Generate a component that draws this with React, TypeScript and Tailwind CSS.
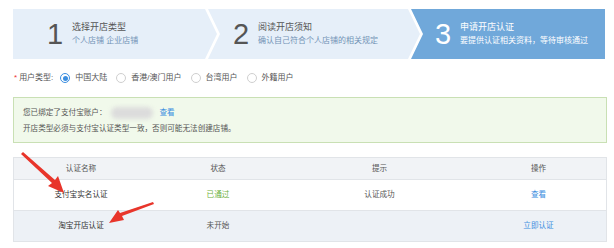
import { useState } from "react";

type Step = {
  num: string;
  title: string;
  desc: string;
  active?: boolean;
};

const steps: Step[] = [
  { num: "1", title: "选择开店类型", desc: "个人店铺  企业店铺" },
  { num: "2", title: "阅读开店须知", desc: "确认自己符合个人店铺的相关规定" },
  { num: "3", title: "申请开店认证", desc: "要提供认证相关资料，等待审核通过", active: true },
];

const userTypes = ["中国大陆", "香港/澳门用户", "台湾用户", "外籍用户"];

type CertRow = {
  name: string;
  status: string;
  statusColor: string;
  tip: string;
  action: string;
  striped?: boolean;
};

const rows: CertRow[] = [
  { name: "支付宝实名认证", status: "已通过", statusColor: "text-[#6cb13c]", tip: "认证成功", action: "查看" },
  { name: "淘宝开店认证", status: "未开始", statusColor: "text-[#555]", tip: "", action: "立即认证", striped: true },
];

export default function App() {
  const [userType, setUserType] = useState<string>("中国大陆");

  return (
    <div className="relative w-[614px] h-[248px] bg-white pt-[9px] px-[13px] font-['Liberation_Sans','Noto_Sans_CJK_SC',sans-serif] text-[#555] overflow-hidden">
      {/* Steps */}
      <div className="flex h-[50px] w-[592px]">
        {steps.map((step, i) => (
          <div
            key={step.num}
            className={
              i === 0
                ? "flex items-center h-full w-[204px] pl-[34px] bg-[#e6eff9] [clip-path:polygon(0_0,calc(100%-12px)_0,100%_50%,calc(100%-12px)_100%,0_100%)]"
                : i === 1
                ? "flex items-center h-full w-[212px] -ml-[9px] pl-[25px] bg-[#e6eff9] [clip-path:polygon(0_0,calc(100%-12px)_0,100%_50%,calc(100%-12px)_100%,0_100%,12px_50%)]"
                : "flex items-center h-full flex-1 -ml-[9px] pl-[24px] bg-[#70a8da] [clip-path:polygon(0_0,100%_0,100%_100%,0_100%,12px_50%)]"
            }
          >
            <span
              className={
                "text-[29px] leading-none w-[16px] " +
                (step.active ? "text-white" : "text-[#555]")
              }
            >
              {step.num}
            </span>
            <div className="ml-[9px] flex flex-col -mt-[2px]">
              <span className={"text-[9px] leading-[14px] " + (step.active ? "text-white" : "text-[#555]")}>
                {step.title}
              </span>
              <span className={"text-[8px] leading-[13px] " + (step.active ? "text-white" : "text-[#7393b6]")}>
                {step.desc}
              </span>
            </div>
          </div>
        ))}
      </div>

      {/* User type */}
      <div className="flex items-center h-[16px] mt-[11px] text-[8px]">
        <span className="text-[#e33] mr-[2px] ml-[1px]">*</span>
        <span>用户类型:</span>
        <div className="flex items-center ml-[7px] gap-[9px]">
          {userTypes.map((t) => (
            <label key={t} className="flex items-center cursor-pointer" onClick={() => setUserType(t)}>
              {userType === t ? (
                <span className="w-[10px] h-[10px] rounded-full border border-[#3b8ee0] flex items-center justify-center">
                  <span className="w-[5px] h-[5px] rounded-full bg-[#3b8ee0]" />
                </span>
              ) : (
                <span className="w-[10px] h-[10px] rounded-full border border-[#cfcfcf]" />
              )}
              <span className="ml-[5px]">{t}</span>
            </label>
          ))}
        </div>
      </div>

      {/* Notice */}
      <div className="mt-[11px] w-[594px] h-[46px] border border-[#c9e0b4] bg-[#f1f9eb] pl-[9px] pt-[7px] text-[7.6px] leading-[16px] text-[#555]">
        <div className="flex items-center">
          <span>您已绑定了支付宝账户：</span>
          <span className="ml-[4px] w-[42px] h-[12px] rounded-full bg-[#dcdcdc] blur-[2px]" />
          <span className="ml-[7px] text-[#3b8ee0]">查看</span>
        </div>
        <div>开店类型必须与支付宝认证类型一致，否则可能无法创建店铺。</div>
      </div>

      {/* Table */}
      <div className="mt-[14px] w-[594px] border border-[#e1e4e8] text-[7.6px]">
        <div className="grid grid-cols-[134px_140px_183px_1fr] h-[22px] items-center text-center bg-[#f1f3f6] border-b border-[#e1e4e8] text-[#555]">
          <span>认证名称</span>
          <span>状态</span>
          <span>提示</span>
          <span>操作</span>
        </div>
        {rows.map((row) => (
          <div
            key={row.name}
            className={
              "grid grid-cols-[134px_140px_183px_1fr] items-center text-center border-b border-[#e1e4e8] last:border-b-0 " +
              (row.striped ? "h-[30px] bg-[#edf1f6]" : "h-[31px] bg-white")
            }
          >
            <span className="text-[#333]">{row.name}</span>
            <span className={row.statusColor}>{row.status}</span>
            <span className="text-[#555]">{row.tip}</span>
            <span className="text-[#3b8ee0]">{row.action}</span>
          </div>
        ))}
      </div>

      {/* Annotation arrows */}
      <svg className="absolute left-0 top-0 pointer-events-none" width="614" height="248" viewBox="0 0 614 248">
        <polygon points="21,154 23,152 55,180 58,176 64,193 48,186 52,183" fill="#e8352b" />
        <polygon points="153,202 154,204 122,216 124,220 109,223 118,210 120,213" fill="#e8352b" />
      </svg>
    </div>
  );
}
